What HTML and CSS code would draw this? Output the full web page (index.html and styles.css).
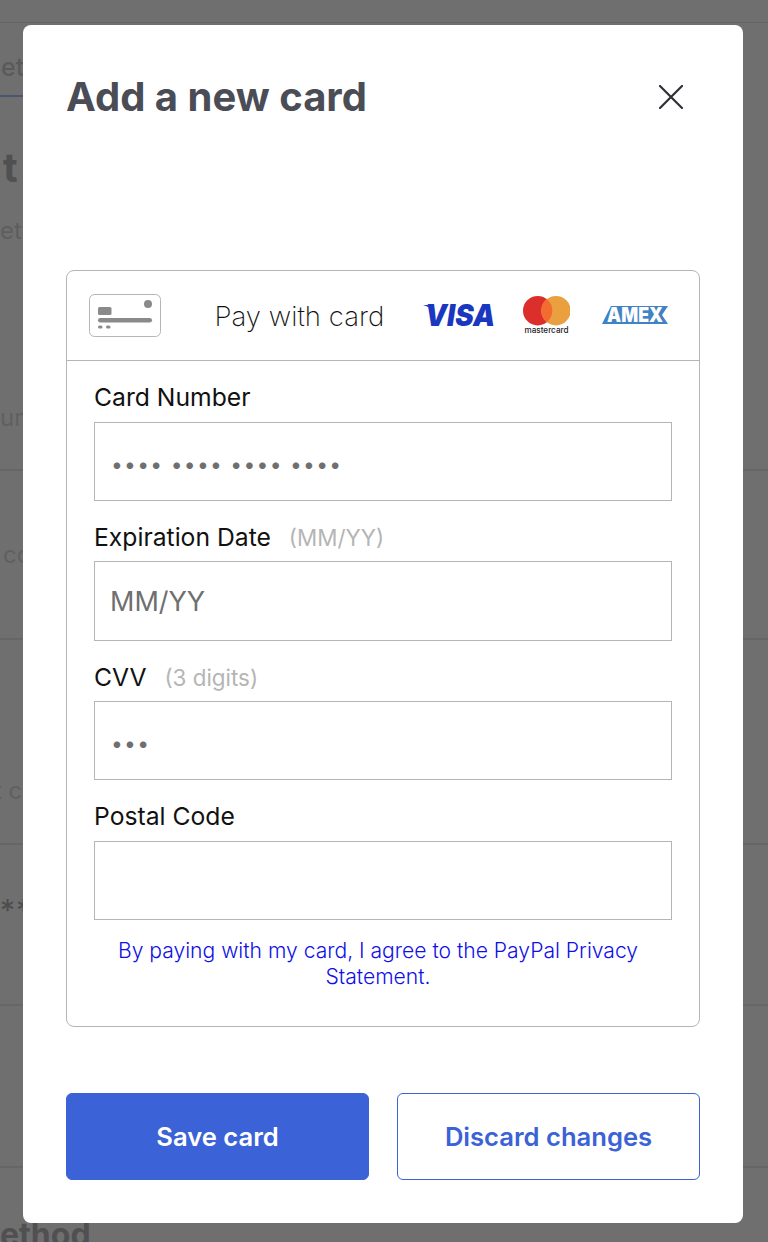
FILE: index.html
```html
<!DOCTYPE html>
<html lang="en">
<head>
<meta charset="utf-8">
<title>Add a new card</title>
<link rel="stylesheet" href="styles.css">
</head>
<body>
<div class="page">
  <div class="topbar"></div>
  <div class="tabs"><span class="tab">et</span></div>
  <div class="page-title">t</div>
  <p class="page-sub">et</p>
  <div class="sec sec-a"><span class="sec-text">un</span></div>
  <div class="sec sec-b"><span class="sec-text">co</span></div>
  <div class="sec sec-c"><span class="sec-text">t c</span></div>
  <div class="sec sec-d"><span class="sec-text stars">**</span></div>
  <div class="sec sec-e"></div>
  <div class="page-method">ethod</div>
</div>
<div class="overlay"></div>
<main class="modal">
  <header class="modal-head">
    <h2 class="modal-title">Add a new card</h2>
    <svg class="close" viewBox="0 0 24 24" width="24" height="24" aria-label="Close"><path d="M1 1 L23 23 M23 1 L1 23"/></svg>
  </header>
  <section class="card">
    <div class="card-head">
      <svg class="card-icon" viewBox="0 0 72 43" width="72" height="43">
        <rect x="0.5" y="0.5" width="71" height="42" rx="5" class="ci-border"/>
        <rect x="9" y="13" width="13.5" height="8" rx="1.5"/>
        <circle cx="59" cy="10" r="4"/>
        <rect x="9" y="24" width="54" height="4.5" rx="2.2"/>
        <rect x="9" y="31.5" width="4.5" height="3" rx="1.5"/>
        <rect x="17" y="31.5" width="4.5" height="3" rx="1.5"/>
      </svg>
      <span class="pay-title">Pay with card</span>
      <svg class="logo-visa" viewBox="0 0 72 24" width="72" height="24">
        <path class="visa-tick" d="M0 2 H9 L11 10 Q8 4 0 2Z"/>
        <text x="2" y="23" textLength="70" lengthAdjust="spacingAndGlyphs">VISA</text>
      </svg>
      <svg class="logo-mc" viewBox="0 0 48 40" width="48" height="40">
        <circle cx="15.7" cy="14.7" r="14.7" fill="#dc2f2c"/>
        <circle cx="34" cy="14.7" r="14.7" fill="#eba03f"/>
        <path d="M24.85 3.2a14.7 14.7 0 0 1 0 23a14.7 14.7 0 0 1 0-23z" fill="#f26c30"/>
        <text x="2.5" y="37" textLength="44" lengthAdjust="spacingAndGlyphs">mastercard</text>
      </svg>
      <svg class="logo-amex" viewBox="0 0 66 18" width="66" height="18">
        <path d="M9 0H66L60 9L66 18H0Z" fill="#3f82c5"/>
        <text x="5" y="15.5" textLength="56" lengthAdjust="spacingAndGlyphs">AMEX</text>
      </svg>
    </div>
    <form class="form">
      <label class="field">
        <span class="label label-tall">Card Number</span>
        <input class="input dots" type="text" placeholder="•••• •••• •••• ••••">
      </label>
      <label class="field">
        <span class="label">Expiration Date <em class="hint">(MM/YY)</em></span>
        <input class="input input-tall" type="text" placeholder="MM/YY">
      </label>
      <label class="field">
        <span class="label">CVV <em class="hint">(3 digits)</em></span>
        <input class="input dots" type="text" placeholder="•••">
      </label>
      <label class="field">
        <span class="label label-tall">Postal Code</span>
        <input class="input" type="text">
      </label>
      <p class="privacy">By paying with my card, I agree to the PayPal Privacy Statement.</p>
    </form>
  </section>
  <div class="actions">
    <button class="btn btn-primary" type="button">Save card</button>
    <button class="btn btn-secondary" type="button">Discard changes</button>
  </div>
</main>
</body>
</html>
```
FILE: styles.css
```css
* { box-sizing: border-box; }
html, body { margin: 0; padding: 0; height: 100%; overflow: hidden; }
body { font-family: "Inter", "Liberation Sans", sans-serif; background: #fff; color: #4a4d55; position: relative; }

/* Page dimmed behind the dialog */
.page { height: 1242px; overflow: hidden; }
.topbar { height: 23px; border-bottom: 1px solid #e8e8e8; }
.tabs { height: 74px; display: flex; align-items: flex-end; }
.tab { font-size: 25px; line-height: 30px; font-weight: 500; width: 23px; padding: 0 0 13px 1px; border-bottom: 2px solid #acc4ff; color: #cfcfd4; white-space: nowrap; }
.page-title { margin: 45px 0 0 3px; font-size: 40px; line-height: 52px; font-weight: 700; color: #b8b8bc; }
.page-sub { margin: 22px 0 0; font-size: 24px; line-height: 30px; color: #d8d8da; }
.sec { border-bottom: 2px solid #ebebeb; }
.sec-text { display: block; font-size: 24px; line-height: 30px; color: #dcdcde; white-space: nowrap; }
.sec-a { height: 225px; padding-top: 157px; }
.sec-b { height: 169px; padding-top: 69px; padding-left: 3px; }
.sec-c { height: 205px; padding-top: 136px; margin-left: -6px; }
.sec-d { height: 161px; padding-top: 50px; }
.stars { font-size: 30px; letter-spacing: 1px; color: #b0b0b2; }
.sec-e { height: 162px; }
.page-method { margin-top: 47px; font-size: 32px; line-height: 40px; font-weight: 700; color: #b8b8bc; }

.overlay { position: absolute; inset: 0; background: rgba(0,0,0,.565); }

/* Dialog */
.modal { position: absolute; left: 23px; top: 25px; width: 720px; height: 1198px; background: #fff; border-radius: 8px; padding: 43px; display: flex; flex-direction: column; }
.modal-head { display: flex; justify-content: space-between; align-items: center; height: 58px; padding-right: 17px; }
.modal-title { margin: 0; font-size: 40px; line-height: 58px; font-weight: 700; color: #4a4d55; }
.close { fill: none; stroke: #2e3036; stroke-width: 2.2; stroke-linecap: round; }

.card { margin-top: 144px; height: 757px; border: 1px solid #b5b5b5; border-radius: 8px; display: flex; flex-direction: column; }
.card-head { height: 90px; border-bottom: 1px solid #b5b5b5; display: flex; align-items: center; padding: 0 22px; }
.card-icon { fill: #8a8a8a; margin-top: -1px; flex: none; }
.ci-border { fill: none; stroke: #b5b5b5; }
.pay-title { margin-left: 53.5px; font-size: 27.6px; font-weight: 250; color: #111; width: 208.5px; flex: none; }
.logo-visa { flex: none; margin-top: -2px; fill: #1a37c0; overflow: visible; }
.logo-visa text { font-family: "Inter", sans-serif; font-size: 30px; font-weight: 900; font-style: italic; }
.logo-mc { flex: none; margin-left: 27px; }
.logo-mc text { font-family: "Inter", sans-serif; font-size: 8.6px; font-weight: 500; fill: #222; }
.logo-amex { flex: none; margin-left: 32px; margin-top: -2px; }
.logo-amex text { font-family: "Inter", sans-serif; font-size: 20px; font-weight: 900; fill: #fff; }

.form { padding: 0 27px; display: flex; flex-direction: column; }
.field { display: flex; flex-direction: column; }
.label { font-size: 24.7px; line-height: 30px; color: #111; height: 60px; padding-top: 21px; display: block; font-weight: 400; }
.label-tall { height: 61px; }
.hint { font-style: normal; font-size: 22.4px; color: #b5b5b5; margin-left: 11px; }
.input { height: 79px; width: 100%; border: 1px solid #b5b5b5; background: #fff; padding: 0 15px; font: 400 27px "Inter", sans-serif; color: #6f6f6f; border-radius: 0; outline: 0; }
.input-tall { height: 80px; }
.input::placeholder { color: #6f6f6f; opacity: 1; }
.dots { font-size: 21px; letter-spacing: 1.3px; padding: 5px 16px 0; }
.privacy { margin: 18px 10px 0 0; text-align: center; font-size: 21.1px; line-height: 26px; font-weight: 300; color: #1010e8; }

.actions { display: flex; gap: 28px; margin-top: 66px; }
.btn { flex: 1 1 0; height: 87px; padding: 0; border: 1px solid #3b62d6; border-radius: 6px; font: 600 25.6px "Inter", sans-serif; cursor: pointer; }
.btn-primary { background: #3b62d6; color: #fff; }
.btn-secondary { background: #fff; color: #3b62d6; }
```
